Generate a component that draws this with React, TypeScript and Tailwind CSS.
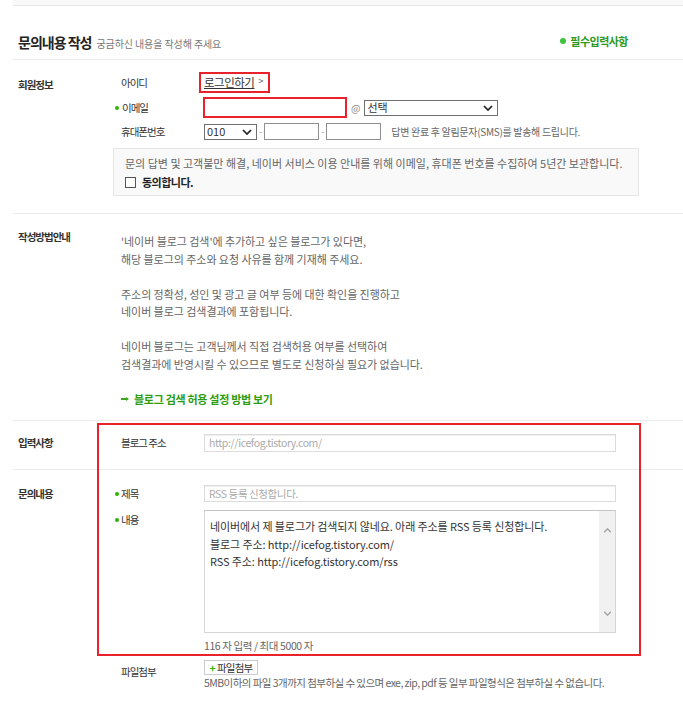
import React from "react";

function Chevron({ className }: { className?: string }) {
  return (
    <svg viewBox="0 0 10 6" className={className} fill="none" stroke="currentColor" strokeWidth="1.7">
      <path d="M1 1l4 4 4-4" />
    </svg>
  );
}

function Dot() {
  return <span className="inline-block h-[4px] w-[4px] rounded-full bg-[#2db400]" />;
}

function SubLabel({ children, dot }: { children: React.ReactNode; dot?: boolean }) {
  return (
    <div className="flex w-[91px] shrink-0 items-center text-[10.5px] tracking-[-1px] text-[#333]">
      <span className="flex w-[8px] items-center justify-start pl-[2px]">{dot && <Dot />}</span>
      {children}
    </div>
  );
}

export default function App() {
  return (
    <div className="min-h-[701px] w-[683px] bg-white font-['Noto_Sans_CJK_KR',sans-serif] text-[#333]">
      <div className="ml-[13px]">
        <div className="h-[6px] border-b border-[#e6e6e6] bg-[#f9f9f9]" />

        {/* header */}
        <div className="flex h-[54px] items-end justify-between border-b border-[#ebebeb] pb-[7px] pl-[5px] pr-[55px]">
          <div className="flex items-baseline gap-[5px]">
            <h2 className="text-[14px] font-bold leading-[20px] tracking-[-1px] text-[#222]">문의내용 작성</h2>
            <span className="text-[10px] tracking-[-0.1px] text-[#777]">궁금하신 내용을 작성해 주세요</span>
          </div>
          <div className="mb-[3px] flex items-center gap-[4px] text-[11px] font-bold tracking-[-0.5px] text-[#2c9a22]">
            <span className="h-[6px] w-[6px] rounded-full bg-[#3cc43c]" />
            필수입력사항
          </div>
        </div>

        {/* 회원정보 */}
        <div className="flex border-b border-[#ebebeb] pb-[17px] pl-[5px] pt-[12px]">
          <div className="mt-[5px] w-[95px] shrink-0 text-[10.5px] font-bold leading-[16px] tracking-[-1px]">회원정보</div>
          <div>
            <div className="flex h-[21px] items-center">
              <SubLabel>아이디</SubLabel>
              <div className="ml-[-5px] flex h-[21px] items-center border-2 border-[#e8212b] pl-[3px] pr-[5px] text-[11.5px] tracking-[-0.5px] text-[#333]">
                <span className="underline">로그인하기</span>
                <span className="ml-[4px] mt-[-4px] text-[9px] text-[#555]">&gt;</span>
              </div>
            </div>
            <div className="mt-[4px] flex h-[21px] items-center">
              <SubLabel dot>
                <span className="ml-[1px]">이메일</span>
              </SubLabel>
              <div className="ml-[-1px] h-[21px] w-[144px] border-2 border-[#e8212b] bg-white" />
              <span className="mx-[4px] text-[10px] text-[#888]">@</span>
              <div className="flex h-[16px] w-[134px] items-center justify-between border border-[#6f6f6f] px-[2px] text-[11px]">
                <span>선택</span>
                <Chevron className="mr-[2px] h-[6px] w-[10px] text-[#222]" />
              </div>
            </div>
            <div className="mt-[5px] flex h-[17px] items-center">
              <SubLabel>휴대폰번호</SubLabel>
              <div className="flex h-[16px] w-[53px] items-center justify-between border border-[#6f6f6f] px-[2px] text-[11px]">
                <span>010</span>
                <Chevron className="mr-[2px] h-[6px] w-[10px] text-[#222]" />
              </div>
              <span className="mx-[2px] text-[9px] text-[#999]">-</span>
              <div className="h-[17px] w-[55px] border border-[#8f8f8f]" />
              <span className="mx-[2px] text-[9px] text-[#999]">-</span>
              <div className="h-[17px] w-[55px] border border-[#8f8f8f]" />
              <span className="ml-[10px] text-[10px] tracking-[-0.3px] text-[#666]">답변 완료 후 알림문자(SMS)를 발송해 드립니다.</span>
            </div>
            <div className="mt-[8px] h-[48px] w-[526px] border border-[#e5e5e5] bg-[#f9f9f9] px-[11px] pt-[6px]">
              <p className="text-[11px] leading-[16px] tracking-[0px] text-[#666]">
                문의 답변 및 고객불만 해결, 네이버 서비스 이용 안내를 위해 이메일, 휴대폰 번호를 수집하여 5년간 보관합니다.
              </p>
              <label className="mt-[3px] flex items-center gap-[6px]">
                <span className="h-[11px] w-[11px] border border-[#555] bg-white" />
                <span className="text-[11px] font-bold leading-[16px] tracking-[-0.5px] text-[#222]">동의합니다.</span>
              </label>
            </div>
          </div>
        </div>

        {/* 작성방법안내 */}
        <div className="flex border-b border-[#ebebeb] pb-[12px] pl-[5px] pt-[15px]">
          <div className="w-[103px] shrink-0 text-[10.5px] font-bold leading-[16px] tracking-[-1px]">작성방법안내</div>
          <div className="mt-[4px] text-[11px] leading-[17.5px] tracking-[-0.05px] text-[#666]">
            <p>'네이버 블로그 검색'에 추가하고 싶은 블로그가 있다면,</p>
            <p>해당 블로그의 주소와 요청 사유를 함께 기재해 주세요.</p>
            <p>&nbsp;</p>
            <p>주소의 정확성, 성인 및 광고 글 여부 등에 대한 확인을 진행하고</p>
            <p>네이버 블로그 검색결과에 포함됩니다.</p>
            <p>&nbsp;</p>
            <p>네이버 블로그는 고객님께서 직접 검색허용 여부를 선택하여</p>
            <p>검색결과에 반영시킬 수 있으므로 별도로 신청하실 필요가 없습니다.</p>
            <p>&nbsp;</p>
            <a className="flex items-center gap-[5px] font-bold tracking-[-0.3px] text-[#2e9c0f]">
              <svg viewBox="0 0 8 4" className="h-[4px] w-[8px]" fill="#3aa51a">
                <path d="M0 1h5V0l3 2-3 2V3H0z" />
              </svg>
              블로그 검색 허용 설정 방법 보기
            </a>
          </div>
        </div>

        <div className="relative">
          {/* 입력사항 */}
          <div className="flex items-center border-b border-[#ebebeb] pb-[17px] pl-[5px] pt-[13px]">
            <div className="w-[95px] shrink-0 text-[10.5px] font-bold leading-[16px] tracking-[-1px]">입력사항</div>
            <SubLabel>블로그 주소</SubLabel>
            <div className="flex h-[18px] w-[412px] items-center border border-[#dcdcdc] px-[4px] text-[10.5px] tracking-[-0.4px] text-[#aaa] shadow-[inset_0_1px_0_#eee]">
              http://icefog.tistory.com/
            </div>
          </div>

          {/* 문의내용 */}
          <div className="flex pl-[5px] pt-[15px]">
            <div className="mt-[1px] w-[95px] shrink-0 text-[10.5px] font-bold leading-[16px] tracking-[-1px]">문의내용</div>
            <div>
              <div className="flex h-[17px] items-center">
                <SubLabel dot>제목</SubLabel>
                <div className="flex h-[17px] w-[412px] items-center border border-[#dcdcdc] px-[4px] text-[10.5px] tracking-[-0.4px] text-[#aaa] shadow-[inset_0_1px_0_#eee]">
                  RSS 등록 신청합니다.
                </div>
              </div>
              <div className="mt-[8px] flex items-start">
                <div className="pt-[2px]">
                  <SubLabel dot>내용</SubLabel>
                </div>
                <div className="flex h-[123px] w-[412px] border border-[#d5d5d5] border-t-[#c4c4c4]">
                  <div className="flex-1 pl-[5px] pt-[7px] text-[11px] leading-[17.5px] tracking-[-0.1px] text-[#333]">
                    <p>네이버에서 제 블로그가 검색되지 않네요. 아래 주소를 RSS 등록 신청합니다.</p>
                    <p>블로그 주소: http://icefog.tistory.com/</p>
                    <p>RSS 주소: http://icefog.tistory.com/rss</p>
                  </div>
                  <div className="flex w-[16px] flex-col items-center justify-between bg-[#f1f1f1] pb-[16px] pt-[17px] text-[#a3a3a3]">
                    <Chevron className="h-[5px] w-[9px] rotate-180" />
                    <Chevron className="h-[5px] w-[9px]" />
                  </div>
                </div>
              </div>
              <div className="ml-[91px] mt-[5px] text-[10.5px] leading-[16px] tracking-[-0.4px] text-[#666]">116 자 입력 / 최대 5000 자</div>
              <div className="mt-[6px] flex items-start">
                <SubLabel>
                  <span className="mt-[4px]">파일첨부</span>
                </SubLabel>
                <div>
                  <button className="flex h-[15px] w-[54px] items-center justify-center gap-[2px] border border-[#ccc] bg-white text-[10.5px] tracking-[-0.8px] text-[#333]">
                    <span className="font-bold text-[#2db400]">+</span>파일첨부
                  </button>
                  <p className="text-[10.5px] leading-[16px] tracking-[-0.55px] text-[#666]">
                    5MB이하의 파일 3개까지 첨부하실 수 있으며 exe, zip, pdf 등 일부 파일형식은 첨부하실 수 없습니다.
                  </p>
                </div>
              </div>
            </div>
          </div>

          <div className="pointer-events-none absolute left-[84px] top-[2px] h-[233px] w-[544px] border-2 border-[#e8212b]" />
        </div>
      </div>
    </div>
  );
}
